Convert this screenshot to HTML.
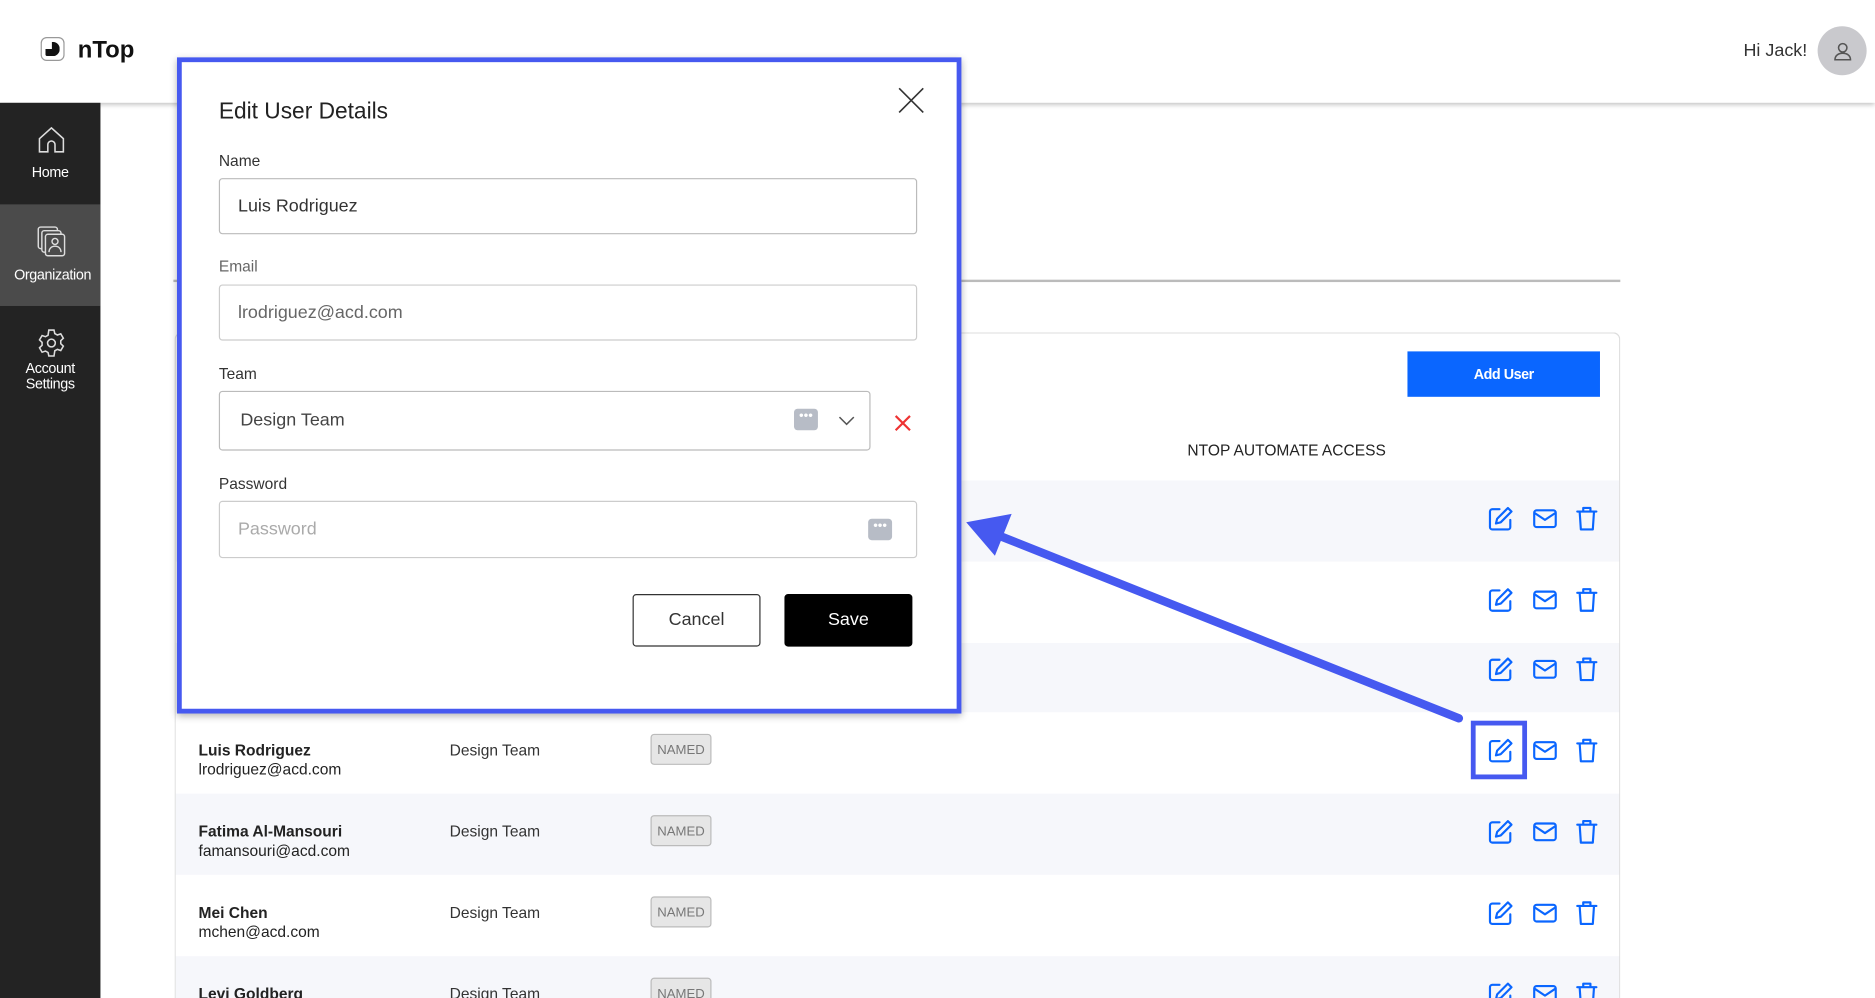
<!DOCTYPE html>
<html><head><meta charset="utf-8"><style>
html,body{margin:0;padding:0;width:1875px;height:998px;overflow:hidden;background:#fff;font-family:"Liberation Sans",sans-serif}
#w{position:absolute;left:0;top:0;width:1568px;height:835px;overflow:hidden;transform:scale(1.1958,1.1952);transform-origin:0 0}
.a{position:absolute}
.hdr{left:0;top:0;width:1568px;height:86px;background:#fff;box-shadow:0 2px 4px rgba(0,0,0,.25);z-index:2}
.side{left:0;top:86px;width:84px;height:749px;background:#232323;z-index:3}
.nav{position:absolute;left:0;width:84px;height:85px;color:#fff;font-size:12px;text-align:center;letter-spacing:-.3px}
.row{position:absolute;left:147px;width:1207px;height:68px;overflow:hidden}
.nm{position:absolute;left:19px;top:24px;font-size:13px;color:#222;line-height:16px}
.nm b{font-weight:bold;color:#222}
.tm{position:absolute;left:229px;top:24px;font-size:13px;color:#333}
.bd{position:absolute;left:397px;top:18px;width:49px;height:24px;background:#e6e6e6;border:1px solid #bbb;border-radius:3px;font-size:11px;color:#777;text-align:center;line-height:26px}
.ic{position:absolute;top:21px}
.lbl{position:absolute;left:183px;font-size:13px;color:#333}
.inp{position:absolute;left:183px;width:584px;border:1px solid #bbb;border-radius:3px;font-size:15px;color:#333;box-sizing:border-box;padding-left:15px}
</style></head><body><div id="w">
<div class="a hdr">
 <div class="a" style="left:34px;top:31px;width:20px;height:20px;border:1px solid #999;border-radius:5px;box-sizing:border-box"></div>
 <div class="a" style="left:38px;top:35px;width:12px;height:12px;background:#111;border-radius:2px 7px 7px 2px;clip-path:polygon(0 50%,45% 50%,45% 0,100% 0,100% 100%,0 100%)"></div>
 <div class="a" style="left:65px;top:31px;font-size:20px;font-weight:bold;color:#111">nTop</div>
 <div class="a" style="left:1458px;top:34px;font-size:15px;color:#333">Hi Jack!</div>
 <div class="a" style="left:1520px;top:22px;width:41px;height:41px;border-radius:50%;background:#c9c9cd"></div>
 <svg class="a" style="left:1532px;top:34px" width="18" height="18" viewBox="0 0 18 18" fill="none" stroke="#555" stroke-width="1.3"><circle cx="9" cy="6" r="3.5"/><path d="M2.5 16c0-3.5 3-5.5 6.5-5.5s6.5 2 6.5 5.5z"/></svg>
</div>
<div class="a side">
 <div class="nav" style="top:0"><svg style="position:absolute;left:31px;top:19px" width="24" height="24" viewBox="0 0 24 24" fill="none" stroke="#ddd" stroke-width="1.3"><path d="M2 11L12 2l10 9v11h-7v-6a3 3 0 0 0-6 0v6H2z"/></svg><div style="position:absolute;top:51px;width:84px">Home</div></div>
 <div class="nav" style="top:85px;background:#4b4b4b"><svg style="position:absolute;left:31px;top:18px" width="26" height="26" viewBox="0 0 26 26" fill="none" stroke="#ddd" stroke-width="1.2"><rect x="1" y="1" width="16" height="18" rx="2"/><rect x="4" y="4" width="16" height="18" rx="2" fill="#4b4b4b"/><rect x="7" y="7" width="16" height="18" rx="2" fill="#4b4b4b"/><circle cx="15" cy="13" r="2.5"/><path d="M10 22c0-3 2-5 5-5s5 2 5 5"/></svg><div style="position:absolute;top:52px;width:84px;left:2px">Organization</div></div>
 <div class="nav" style="top:170px"><svg style="position:absolute;left:30px;top:18px" width="26" height="26" viewBox="0 0 24 24" fill="none" stroke="#ddd" stroke-width="1.2"><circle cx="12" cy="12" r="3"/><path d="M10 2h4l.6 2.7 2 1.1 2.6-.9 2 3.4-2 1.9v2.3l2 1.9-2 3.4-2.6-.9-2 1.1L14 22h-4l-.6-2.7-2-1.1-2.6.9-2-3.4 2-1.9v-2.3l-2-1.9 2-3.4 2.6.9 2-1.1z"/></svg><div style="position:absolute;top:46px;width:84px;line-height:13px">Account<br>Settings</div></div>
</div>
<div class="a" style="left:145px;top:234px;width:1210px;height:2px;background:#bbb"></div>
<div class="a" style="left:146px;top:278px;width:1207px;height:556px;border:1px solid #ddd;border-bottom:none;border-radius:6px 6px 0 0"></div>
<div class="a" style="left:1177px;top:294px;width:161px;height:38px;background:#0a66ff;color:#fff;font-size:12px;font-weight:bold;text-align:center;line-height:38px;letter-spacing:-.4px">Add User</div>
<div class="a" style="left:993px;top:369px;font-size:13px;color:#222">NTOP AUTOMATE ACCESS</div>
<div id="rows"></div>
<svg class="a" style="left:0;top:0;z-index:4" width="1568" height="835"><path d="M1220 601 L835 448" stroke="#4659f0" stroke-width="7" stroke-linecap="round"/><path d="M808 437 L846 430 L832 465 Z" fill="#4659f0"/><rect x="1232" y="605" width="43" height="45" fill="none" stroke="#4659f0" stroke-width="4"/></svg>
<div class="a" style="left:148px;top:48px;width:648px;height:541px;border:4px solid #4659f0;background:#fff;z-index:5;box-shadow:0 2px 6px rgba(0,0,0,.3);overflow:hidden">
<div style="position:absolute;left:-152px;top:-52px;width:1000px;height:700px">
 <div class="a" style="left:183px;top:83px;font-size:19px;color:#222">Edit User Details</div>
 <svg class="a" style="left:751px;top:73px" width="22" height="22" viewBox="0 0 24 24" stroke="#333" stroke-width="1.5"><path d="M1 1L23 23M23 1L1 23"/></svg>
 <div class="lbl" style="top:127px">Name</div>
 <div class="inp" style="top:149px;height:47px;line-height:45px">Luis Rodriguez</div>
 <div class="lbl" style="top:215px;color:#666">Email</div>
 <div class="inp" style="top:238px;height:47px;line-height:45px;color:#666;border-color:#ccc">lrodriguez@acd.com</div>
 <div class="lbl" style="top:305px">Team</div>
 <div class="inp" style="top:327px;width:545px;height:50px;line-height:48px;padding-left:17px;color:#444">Design Team</div>
 <div class="a" style="left:664px;top:342px;width:20px;height:18px;background:#b7bcc6;border-radius:3px;color:#fff;font-size:11px;text-align:center;line-height:12px">•••</div>
 <svg class="a" style="left:701px;top:348px" width="14" height="9" viewBox="0 0 14 9" fill="none" stroke="#555" stroke-width="1.3"><path d="M1 1l6 6 6-6"/></svg>
 <svg class="a" style="left:748px;top:347px" width="14" height="14" viewBox="0 0 14 14" stroke="#e33" stroke-width="1.8"><path d="M1 1L13 13M13 1L1 13"/></svg>
 <div class="lbl" style="top:397px">Password</div>
 <div class="inp" style="top:419px;height:48px;line-height:46px;color:#aaa;border-color:#ccc">Password</div>
 <div class="a" style="left:726px;top:434px;width:20px;height:18px;background:#b7bcc6;border-radius:3px;color:#fff;font-size:11px;text-align:center;line-height:12px">•••</div>
 <div class="a" style="left:529px;top:497px;width:105px;height:42px;border:1px solid #333;border-radius:3px;font-size:15px;color:#333;text-align:center;line-height:42px">Cancel</div>
 <div class="a" style="left:656px;top:497px;width:107px;height:44px;background:#000;border-radius:3px;font-size:15px;color:#fff;text-align:center;line-height:44px">Save</div>
</div></div>
<script>
var rows=[[402,1],[470,0],[538,1,58],[596,0,'Luis Rodriguez','lrodriguez@acd.com'],[664,1,'Fatima Al-Mansouri','famansouri@acd.com'],[732,0,'Mei Chen','mchen@acd.com'],[800,1,'Levi Goldberg','lgoldberg@acd.com',35]];
var ic='<svg width="22" height="22" viewBox="0 0 22 22" fill="none" stroke="#0a66ff" stroke-width="1.8" stroke-linejoin="round" stroke-linecap="round"><path d="M10 3H4a2 2 0 0 0-2 2v13a2 2 0 0 0 2 2h13a2 2 0 0 0 2-2v-6"/><path d="M17 2l3 3-9 9-4 1 1-4z"/></svg>';
var ml='<svg width="22" height="22" viewBox="0 0 22 22" fill="none" stroke="#0a66ff" stroke-width="1.8" stroke-linejoin="round"><rect x="2" y="4" width="18" height="14" rx="2"/><path d="M2 6l9 6 9-6"/></svg>';
var tr='<svg width="22" height="22" viewBox="0 0 22 22" fill="none" stroke="#0a66ff" stroke-width="1.8" stroke-linejoin="round" stroke-linecap="round"><path d="M3 5h16M8 5V2h6v3M5 5l1 15h10l1-15"/></svg>';
var h='';
rows.forEach(function(r){var ht=typeof r[2]=='number'?r[2]:(r[4]||68);var off=r[2]==58?-10:0;
h+='<div class="row" style="top:'+r[0]+'px;height:'+ht+'px;background:'+(r[1]?'#f6f7fb':'#fff')+'">';
if(typeof r[2]=='string'){h+='<div class="nm"><b>'+r[2]+'</b><br>'+r[3]+'</div><div class="tm">Design Team</div><div class="bd">NAMED</div>';}
h+='<div class="ic" style="left:1097px;top:'+(21+off)+'px">'+ic+'</div><div class="ic" style="left:1134px;top:'+(21+off)+'px">'+ml+'</div><div class="ic" style="left:1169px;top:'+(21+off)+'px">'+tr+'</div></div>';});
document.getElementById('rows').outerHTML=h;
</script>
</div></body></html>
